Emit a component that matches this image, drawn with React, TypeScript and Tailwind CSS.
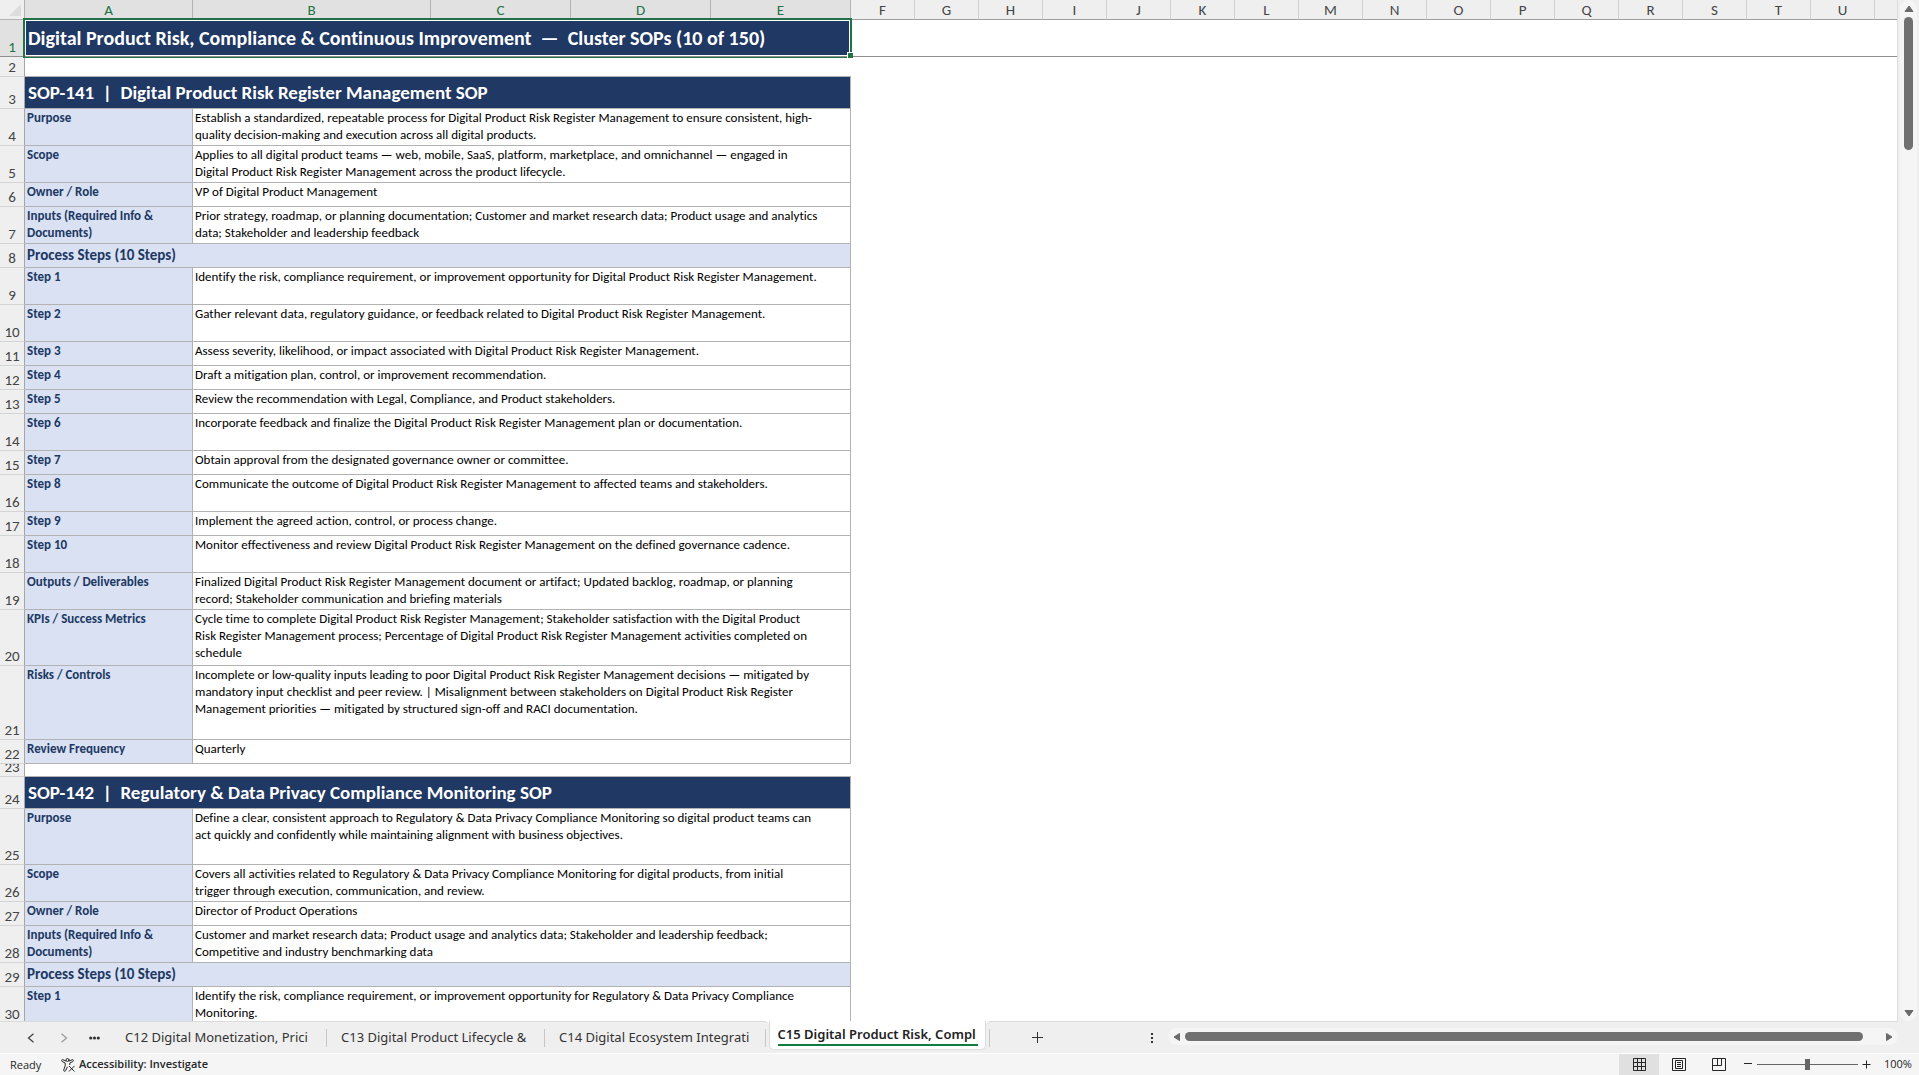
import type { ReactNode } from "react";

type Row =
  | { kind: "title" | "section" | "steps"; n: number; h: string; text: string }
  | { kind: "gap"; n: number; h: string }
  | { kind: "field"; n: number; h: string; label: string; text: string };

const H13 = "h-[13px]";
const H20 = "h-[20px]";
const H24 = "h-[24px]";
const H32 = "h-[32px]";
const H37 = "h-[37px]";
const H56 = "h-[56px]";
const H74 = "h-[74px]";

const field = (n: number, h: string, label: string, text: string): Row => ({ kind: "field", n, h, label, text });

const rows: Row[] = [
  { kind: "title", n: 1, h: H37, text: "Digital Product Risk, Compliance & Continuous Improvement  —  Cluster SOPs (10 of 150)" },
  { kind: "gap", n: 2, h: H20 },
  { kind: "section", n: 3, h: H32, text: "SOP-141  |  Digital Product Risk Register Management SOP" },
  field(4, H37, "Purpose", "Establish a standardized, repeatable process for Digital Product Risk Register Management to ensure consistent, high-\nquality decision-making and execution across all digital products."),
  field(5, H37, "Scope", "Applies to all digital product teams — web, mobile, SaaS, platform, marketplace, and omnichannel — engaged in\nDigital Product Risk Register Management across the product lifecycle."),
  field(6, H24, "Owner / Role", "VP of Digital Product Management"),
  field(7, H37, "Inputs (Required Info &\nDocuments)", "Prior strategy, roadmap, or planning documentation; Customer and market research data; Product usage and analytics\ndata; Stakeholder and leadership feedback"),
  { kind: "steps", n: 8, h: H24, text: "Process Steps (10 Steps)" },
  field(9, H37, "Step 1", "Identify the risk, compliance requirement, or improvement opportunity for Digital Product Risk Register Management."),
  field(10, H37, "Step 2", "Gather relevant data, regulatory guidance, or feedback related to Digital Product Risk Register Management."),
  field(11, H24, "Step 3", "Assess severity, likelihood, or impact associated with Digital Product Risk Register Management."),
  field(12, H24, "Step 4", "Draft a mitigation plan, control, or improvement recommendation."),
  field(13, H24, "Step 5", "Review the recommendation with Legal, Compliance, and Product stakeholders."),
  field(14, H37, "Step 6", "Incorporate feedback and finalize the Digital Product Risk Register Management plan or documentation."),
  field(15, H24, "Step 7", "Obtain approval from the designated governance owner or committee."),
  field(16, H37, "Step 8", "Communicate the outcome of Digital Product Risk Register Management to affected teams and stakeholders."),
  field(17, H24, "Step 9", "Implement the agreed action, control, or process change."),
  field(18, H37, "Step 10", "Monitor effectiveness and review Digital Product Risk Register Management on the defined governance cadence."),
  field(19, H37, "Outputs / Deliverables", "Finalized Digital Product Risk Register Management document or artifact; Updated backlog, roadmap, or planning\nrecord; Stakeholder communication and briefing materials"),
  field(20, H56, "KPIs / Success Metrics", "Cycle time to complete Digital Product Risk Register Management; Stakeholder satisfaction with the Digital Product\nRisk Register Management process; Percentage of Digital Product Risk Register Management activities completed on\nschedule"),
  field(21, H74, "Risks / Controls", "Incomplete or low-quality inputs leading to poor Digital Product Risk Register Management decisions — mitigated by\nmandatory input checklist and peer review. | Misalignment between stakeholders on Digital Product Risk Register\nManagement priorities — mitigated by structured sign-off and RACI documentation."),
  field(22, H24, "Review Frequency", "Quarterly"),
  { kind: "gap", n: 23, h: H13 },
  { kind: "section", n: 24, h: H32, text: "SOP-142  |  Regulatory & Data Privacy Compliance Monitoring SOP" },
  field(25, H56, "Purpose", "Define a clear, consistent approach to Regulatory & Data Privacy Compliance Monitoring so digital product teams can\nact quickly and confidently while maintaining alignment with business objectives."),
  field(26, H37, "Scope", "Covers all activities related to Regulatory & Data Privacy Compliance Monitoring for digital products, from initial\ntrigger through execution, communication, and review."),
  field(27, H24, "Owner / Role", "Director of Product Operations"),
  field(28, H37, "Inputs (Required Info &\nDocuments)", "Customer and market research data; Product usage and analytics data; Stakeholder and leadership feedback;\nCompetitive and industry benchmarking data"),
  { kind: "steps", n: 29, h: H24, text: "Process Steps (10 Steps)" },
  field(30, H37, "Step 1", "Identify the risk, compliance requirement, or improvement opportunity for Regulatory & Data Privacy Compliance\nMonitoring."),
];

const selectedColumns = ["A", "B", "C", "D", "E"];
const otherColumns = "FGHIJKLMNOPQRSTU".split("");

function RowNumber({ n, h, active }: { n: number; h: string; active?: boolean }) {
  return (
    <th
      scope="row"
      className={`border-r border-b border-r-[#a6a6a6] p-0 font-normal ${
        active ? "border-b-[#8f8f8f] bg-[#e1e1e1] text-[#217346]" : "border-b-[#d4d4d4] bg-[#efefef] text-[#444444]"
      }`}
    >
      <div className={`${h} -mb-px flex items-end justify-center overflow-hidden pb-px text-[15px] leading-[18px]`}>{n}</div>
    </th>
  );
}

function SheetRow({ row }: { row: Row }) {
  if (row.kind === "title") {
    return (
      <tr>
        <RowNumber n={row.n} h={row.h} active />
        <td colSpan={5} className="relative border-b border-b-[#8f8f8f] bg-[#203864] p-0 pl-[3px] text-[20px] leading-6 font-bold whitespace-pre text-white">
          {row.text}
          <div className="pointer-events-none absolute -top-0.5 -right-px -bottom-0.5 -left-0.5 border-2 border-[#217346]">
            <div className="h-full border border-white" />
          </div>
          <div className="pointer-events-none absolute -right-0.5 -bottom-0.5 size-[6px] border-t border-l border-white bg-[#217346]" />
          <div className="pointer-events-none absolute right-1 -bottom-px left-0 h-px bg-[#8f8f8f]" />
        </td>
        <td colSpan={17} className="border-b border-b-[#8f8f8f] bg-white p-0" />
      </tr>
    );
  }
  if (row.kind === "gap") {
    return (
      <tr>
        <RowNumber n={row.n} h={row.h} />
        <td colSpan={5} className="border-b border-[#b2b2b2] bg-white p-0" />
        <td colSpan={17} className="bg-white p-0" />
      </tr>
    );
  }
  if (row.kind === "section" || row.kind === "steps") {
    return (
      <tr>
        <RowNumber n={row.n} h={row.h} />
        <th
          colSpan={5}
          className={`border-r border-b border-[#b2b2b2] p-0 text-left font-bold whitespace-pre ${
            row.kind === "section"
              ? "bg-[#203864] pl-[3px] text-[19px] leading-6 text-white"
              : "bg-[#d9e1f2] pb-0.5 pl-0.5 text-[15px] leading-[18px] text-[#203864]"
          }`}
        >
          {row.text}
        </th>
        <td colSpan={17} className="bg-white p-0" />
      </tr>
    );
  }
  return (
    <tr>
      <RowNumber n={row.n} h={row.h} />
      <th className="border-r border-b border-[#b2b2b2] bg-[#d9e1f2] p-0 pl-0.5 text-left align-top text-[13px] leading-[17px] font-bold whitespace-pre-line text-[#203864]">
        {row.label}
      </th>
      <td colSpan={4} className="border-r border-b border-[#b2b2b2] bg-white p-0 pl-0.5 align-top text-[13px] leading-[17px] whitespace-pre-line text-black">
        {row.text}
      </td>
      <td colSpan={17} className="bg-white p-0" />
    </tr>
  );
}

function Sheet() {
  return (
    <table className="w-full table-fixed border-separate border-spacing-0 font-['Calibri','Carlito','Lato',sans-serif] [font-variant-ligatures:none]">
      <colgroup>
        <col className="w-[25px]" />
        <col className="w-[168px]" />
        <col className="w-[238px]" />
        <col className="w-[140px]" />
        <col className="w-[140px]" />
        <col className="w-[140px]" />
        {otherColumns.map((c) => (
          <col key={c} className="w-[64px]" />
        ))}
        <col />
      </colgroup>
      <thead>
        <tr className="h-5">
          <th className="border-r border-b border-r-[#b2b2b2] border-b-[#b2b2b2] bg-[#efefef] p-0">
            <button aria-label="Select all" className="flex w-full justify-end pr-[3px]">
              <svg viewBox="0 0 12 12" className="size-3">
                <path d="M12 0v12H0z" fill="#dcdcdc" />
              </svg>
            </button>
          </th>
          {selectedColumns.map((c) => (
            <th key={c} className="border-r border-b border-r-[#b4b4b4] border-b-[#9f9f9f] bg-[#e1e1e1] p-0 pt-0.5 text-[15px] leading-[17px] font-normal text-[#217346]">
              {c}
            </th>
          ))}
          {otherColumns.map((c) => (
            <th key={c} className="border-r border-b border-r-[#cfcfcf] border-b-[#9f9f9f] bg-[#efefef] p-0 pt-0.5 text-[15px] leading-[17px] font-normal text-[#444444]">
              {c}
            </th>
          ))}
          <th className="border-b border-b-[#9f9f9f] bg-[#efefef] p-0" />
        </tr>
      </thead>
      <tbody>
        {rows.map((row) => (
          <SheetRow key={row.n} row={row} />
        ))}
      </tbody>
    </table>
  );
}

function Arrow({ d, label }: { d: string; label: string }) {
  return (
    <button aria-label={label} className="flex shrink-0 items-center justify-center">
      <svg viewBox="0 0 10 10" className="size-[10px]">
        <path d={d} fill="#6a6a6a" stroke="#6a6a6a" strokeWidth="1" strokeLinejoin="round" />
      </svg>
    </button>
  );
}

function Tab({ width, children }: { width: string; children: ReactNode }) {
  return (
    <button className={`${width} flex shrink-0 items-center justify-between pl-[14px] text-left text-[#333333]`}>
      <span className="whitespace-nowrap">{children}</span>
      <span className="h-[18px] w-px bg-[#c6c6c6]" />
    </button>
  );
}

function TabBar() {
  return (
    <div className="flex h-8 shrink-0 bg-white font-['Noto_Sans',sans-serif] text-[13px]">
      <div className="flex shrink-0 rounded-tr-[5px] border-t border-[#dcdcdc] bg-[#efefef]">
        <div className="flex w-[111px] items-center pl-[27px]">
          <button aria-label="Previous sheet">
            <svg viewBox="0 0 8 10" className="h-[10px] w-2" fill="none" stroke="#444444" strokeWidth="1.3">
              <path d="M6.500 .8 1.500 5l5 4.200" />
            </svg>
          </button>
          <button aria-label="Next sheet" className="ml-[25px]">
            <svg viewBox="0 0 8 10" className="h-[10px] w-2" fill="none" stroke="#9a9a9a" strokeWidth="1.3">
              <path d="m1.500 .8 5 4.200-5 4.200" />
            </svg>
          </button>
          <button aria-label="More sheets" className="ml-[21px]">
            <svg viewBox="0 0 11 4" className="h-1 w-[11px]" fill="#333333">
              <circle cx="1.7" cy="2" r="1.6" />
              <circle cx="5.5" cy="2" r="1.6" />
              <circle cx="9.3" cy="2" r="1.6" />
            </svg>
          </button>
        </div>
        <Tab width="w-[216px]">C12 Digital Monetization, Prici</Tab>
        <Tab width="w-[218px]">C13 Digital Product Lifecycle &amp;</Tab>
        <Tab width="w-[221px]">C14 Digital Ecosystem Integrati</Tab>
        <div className="w-[3px]" />
      </div>
      <div className="shrink-0 bg-[#efefef]">
        <button className="flex h-[29px] w-[217px] justify-center rounded-b-[5px] border-x border-b border-[#dcdcdc] bg-white pt-[5px] font-semibold text-[#222222]">
          <span className="h-5 w-[200px] border-b-2 border-[#107c41] text-left leading-[17px] whitespace-nowrap">C15 Digital Product Risk, Compl</span>
        </button>
      </div>
      <div className="flex min-w-0 flex-1 items-center rounded-tl-[5px] border-t border-[#dcdcdc] bg-[#efefef]">
        <span className="ml-[3px] h-[18px] w-px shrink-0 bg-[#c6c6c6]" />
        <button aria-label="New sheet" className="ml-[42px] shrink-0">
          <svg viewBox="0 0 11 11" className="size-[11px]" stroke="#333333">
            <path d="M5.500 0v11M0 5.500h11" />
          </svg>
        </button>
        <div className="flex-1" />
        <div className="mr-[15px] flex flex-col gap-0.5">
          <span className="size-0.5 bg-[#333333]" />
          <span className="size-0.5 bg-[#333333]" />
          <span className="size-0.5 bg-[#333333]" />
        </div>
        <div className="mb-0.5 flex h-[17px] w-4/5 items-center rounded-full bg-[#f5f5f5] px-1">
          <Arrow label="Scroll left" d="M7.500 1.500v7L2 5z" />
          <div className="mx-[3px] flex-1 pr-[18px]">
            <div className="h-[9px] rounded-full bg-[#707070]" />
          </div>
          <Arrow label="Scroll right" d="M2.500 1.500v7L8 5z" />
        </div>
      </div>
      <div className="w-[21px] shrink-0 bg-[#efefef]" />
    </div>
  );
}

function StatusBar() {
  return (
    <footer className="flex h-[22px] shrink-0 items-center border-t border-white bg-[#f5f5f5] font-['Open_Sans',sans-serif] text-[11px] text-[#262626]">
      <span className="w-[61px] pt-0.5 pl-[10px]">Ready</span>
      <button className="flex items-center gap-[3px] font-semibold">
        <svg viewBox="0 0 15 14" className="h-[14px] w-[15px]" fill="none" stroke="#262626" strokeLinecap="round" strokeLinejoin="round">
          <circle cx="6.500" cy="2" r="1.500" />
          <path d="M4.800 3 1.800 1.700C.5 1.300.1 3 1.200 3.500L4.200 5v2.800L2.700 12c-.3 1.300 1.300 1.800 1.800.8l1.800-3.600" />
          <path d="m8.200 3 3-1.300c1.300-.4 1.700 1.300.6 1.800L8.800 5v1.600" />
          <path d="m8.200 8.200 5 5M13.200 8.200l-5 5" />
        </svg>
        Accessibility: Investigate
      </button>
      <div className="flex-1" />
      <button aria-label="Normal view" className="flex h-full w-10 items-center justify-center bg-[#e0e0e0]">
        <svg viewBox="0 0 13 13" className="size-[13px]" fill="none" stroke="#262626">
          <path d="M.5.5h12v12H.5zM4.500.5v12M8.500.5v12M.5 4.500h12M.5 8.500h12" />
        </svg>
      </button>
      <button aria-label="Page layout view" className="flex h-full w-10 items-center justify-center">
        <svg viewBox="0 0 14 13" className="h-[13px] w-[14px]" fill="none" stroke="#262626">
          <path d="M.5.5h13v12H.5zM3.500 2.500h7v8h-7zM5 4.500h4M5 6.500h4M5 8.500h4" />
        </svg>
      </button>
      <button aria-label="Page break preview" className="flex h-full w-10 items-center justify-center">
        <svg viewBox="0 0 14 13" className="h-[13px] w-[14px]" fill="none" stroke="#262626">
          <path d="M.5.5h13v12H.5zM.5 7.500h9V.5M5.500.5v7" />
        </svg>
      </button>
      <button aria-label="Zoom out" className="ml-[5px]">
        <svg viewBox="0 0 9 9" className="size-[9px]" stroke="#262626">
          <path d="M0 3.500h8" />
        </svg>
      </button>
      <input
        type="range"
        aria-label="Zoom"
        min={0}
        max={100}
        defaultValue={50}
        className="mx-1 h-[11px] w-[101px] appearance-none bg-[linear-gradient(#666666,#666666)] bg-[length:100%_1px] bg-center bg-no-repeat [&::-webkit-slider-thumb]:h-[11px] [&::-webkit-slider-thumb]:w-[5px] [&::-webkit-slider-thumb]:appearance-none [&::-webkit-slider-thumb]:bg-[#666666]"
      />
      <button aria-label="Zoom in">
        <svg viewBox="0 0 9 9" className="size-[9px]" stroke="#262626">
          <path d="M.5 4.500h8M4.500.5v8" />
        </svg>
      </button>
      <button className="mr-[7px] ml-[13px] w-7 text-left">100%</button>
    </footer>
  );
}

export default function App() {
  return (
    <div className="flex h-screen flex-col overflow-hidden bg-white">
      <div className="flex min-h-0 flex-1">
        <main className="min-w-0 flex-1 overflow-hidden border-r border-[#dcdcdc]">
          <Sheet />
        </main>
        <div className="flex w-[21px] shrink-0 justify-center bg-[#efefef]">
          <div className="flex w-[17px] flex-col items-center rounded-full bg-[#f5f5f5] py-[3px]">
            <Arrow label="Scroll up" d="M1 8.500h8L5 3z" />
            <div className="mt-1 min-h-0 w-[9px] flex-1">
              <div className="h-[133px] rounded-full bg-[#707070]" />
            </div>
            <Arrow label="Scroll down" d="M1 2.500h8L5 8z" />
          </div>
        </div>
      </div>
      <TabBar />
      <StatusBar />
    </div>
  );
}
